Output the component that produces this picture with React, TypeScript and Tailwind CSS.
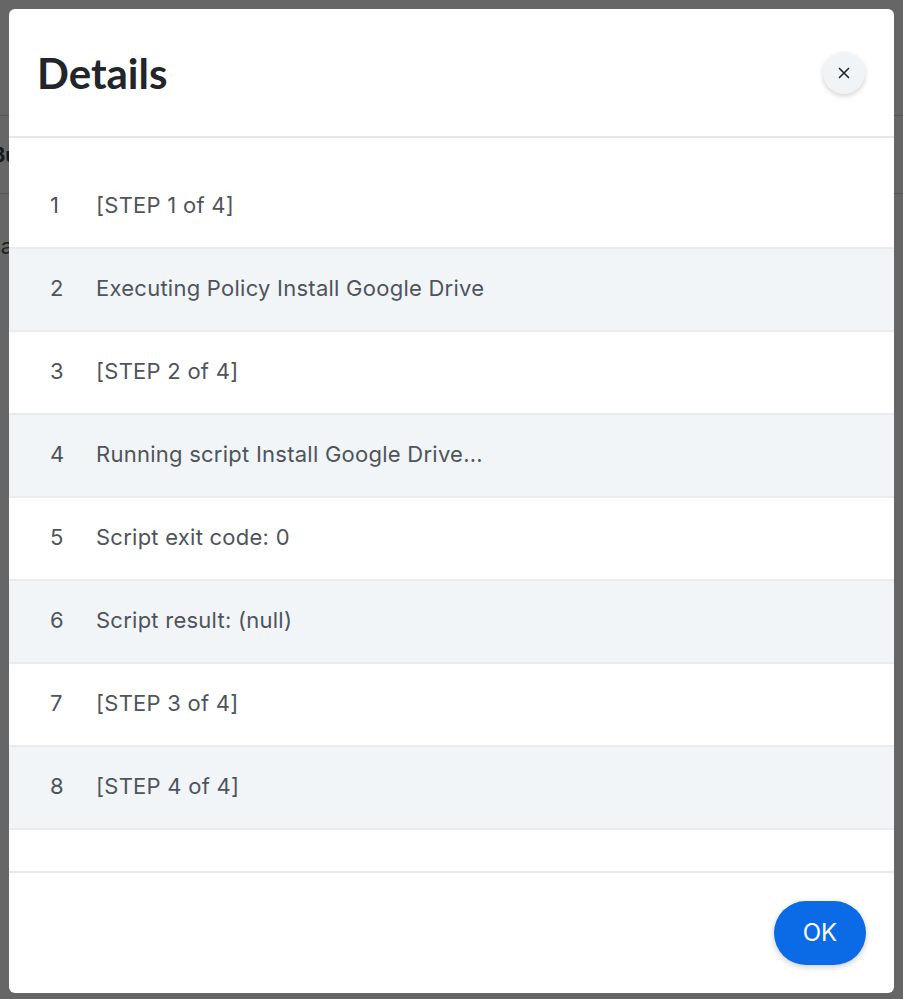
import { X } from 'lucide-react';

const lines = [
  '[STEP 1 of 4]',
  'Executing Policy Install Google Drive',
  '[STEP 2 of 4]',
  'Running script Install Google Drive...',
  'Script exit code: 0',
  'Script result: (null)',
  '[STEP 3 of 4]',
  '[STEP 4 of 4]',
];

export default function App() {
  return (
    <div
      className="relative h-[999px] w-full overflow-hidden bg-white"
      style={{ fontFamily: 'Inter, "Noto Sans", sans-serif' }}
    >
      {/* page behind the overlay */}
      <div className="absolute inset-0">
        <div className="h-[116px] border-b border-gray-300" />
        <div className="flex h-[78px] items-center border-b border-gray-300 text-[20px] font-bold text-gray-700">
          <span className="-ml-[8px]">Build</span>
        </div>
        <div className="flex h-[104px] items-center text-[22px] text-gray-600">
          <span className="-ml-[12px]">ca</span>
        </div>
      </div>

      {/* overlay */}
      <div className="absolute inset-0 flex bg-black/60 pt-[9px] pr-[9px] pb-[6px] pl-[9px]">
        <div className="flex flex-1 flex-col overflow-hidden rounded-[6px] bg-white">
          {/* header */}
          <div className="flex h-[129px] shrink-0 items-center justify-between border-b-2 border-[#e6e8eb] pl-[28px] pr-[29px]">
            <h1
              className="text-[42px] font-bold leading-none text-[#22252a]"
              style={{ fontFamily: 'Lato, "Noto Sans", sans-serif' }}
            >
              Details
            </h1>
            <button className="flex h-[42px] w-[42px] items-center justify-center rounded-full bg-[#f1f4f7] text-[#23262b] shadow-[0_2px_5px_rgba(0,0,0,0.18)]">
              <X size={18} strokeWidth={2.2} />
            </button>
          </div>

          {/* body */}
          <div className="flex-1 pt-[28px]">
            {lines.map((text, i) => (
              <div
                key={i}
                className={`flex h-[83px] items-center border-b-2 border-[#e9ecef] pb-[2px] text-[22px] tracking-[0.25px] text-[#4f545b] ${
                  i % 2 === 1 ? 'bg-[#f1f5f8]' : 'bg-white'
                }`}
              >
                <span className="w-[87px] pl-[41px]">{i + 1}</span>
                <span>{text}</span>
              </div>
            ))}
          </div>

          {/* footer */}
          <div className="flex h-[122px] shrink-0 items-center justify-end border-t-2 border-[#e6e8eb] pr-[28px]">
            <button className="flex h-[64px] w-[92px] items-center justify-center rounded-full bg-[#0b6be6] text-[24px] text-white shadow-[0_2px_6px_rgba(0,0,0,0.2)]">
              OK
            </button>
          </div>
        </div>
      </div>
    </div>
  );
}
